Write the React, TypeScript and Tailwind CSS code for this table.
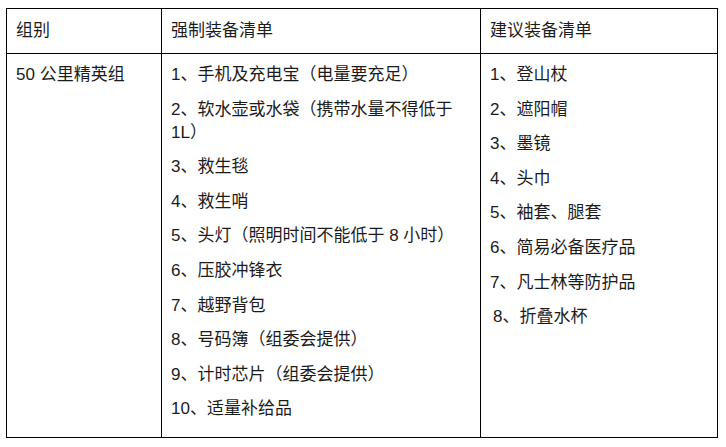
const required = [
  '1、手机及充电宝（电量要充足）',
  '2、软水壶或水袋（携带水量不得低于1L）',
  '3、救生毯',
  '4、救生哨',
  '5、头灯（照明时间不能低于 8 小时）',
  '6、压胶冲锋衣',
  '7、越野背包',
  '8、号码簿（组委会提供）',
  '9、计时芯片（组委会提供）',
  '10、适量补给品',
];

const suggested = [
  '1、登山杖',
  '2、遮阳帽',
  '3、墨镜',
  '4、头巾',
  '5、袖套、腿套',
  '6、简易必备医疗品',
  '7、凡士林等防护品',
  '8、折叠水杯',
];

const ItemList = ({ items, indentLast }: { items: string[]; indentLast?: boolean }) => (
  <div className="flex flex-col gap-[11.6px]">
    {items.map((text, i) => (
      <p
        key={text}
        className={indentLast && i === items.length - 1 ? 'pl-[3px] leading-[23px]' : 'leading-[23px]'}
      >
        {text}
      </p>
    ))}
  </div>
);

export default function App() {
  return (
    <div className="w-[726px] h-[447px] bg-white pt-[8px] pl-[6px]">
      <div
        className="w-[712px] border border-black text-[17px] text-[#1c1c1c]"
        style={{ fontFamily: '"Liberation Sans", "Noto Sans CJK SC", sans-serif' }}
      >
        {/* 表头 */}
        <div className="grid grid-cols-[155px_319px_236px] h-[45px] border-b border-black">
          <div className="flex items-center px-[9px] border-r border-black">组别</div>
          <div className="flex items-center px-[9px] border-r border-black">强制装备清单</div>
          <div className="flex items-center px-[9px]">建议装备清单</div>
        </div>

        {/* 内容 */}
        <div className="grid grid-cols-[155px_319px_236px] h-[383px]">
          <div className="px-[9px] pt-[9px] border-r border-black">
            <p className="leading-[23px]">50 公里精英组</p>
          </div>
          <div className="px-[9px] pt-[9px] border-r border-black">
            <ItemList items={required} />
          </div>
          <div className="px-[9px] pt-[9px]">
            <ItemList items={suggested} indentLast />
          </div>
        </div>
      </div>
    </div>
  );
}
